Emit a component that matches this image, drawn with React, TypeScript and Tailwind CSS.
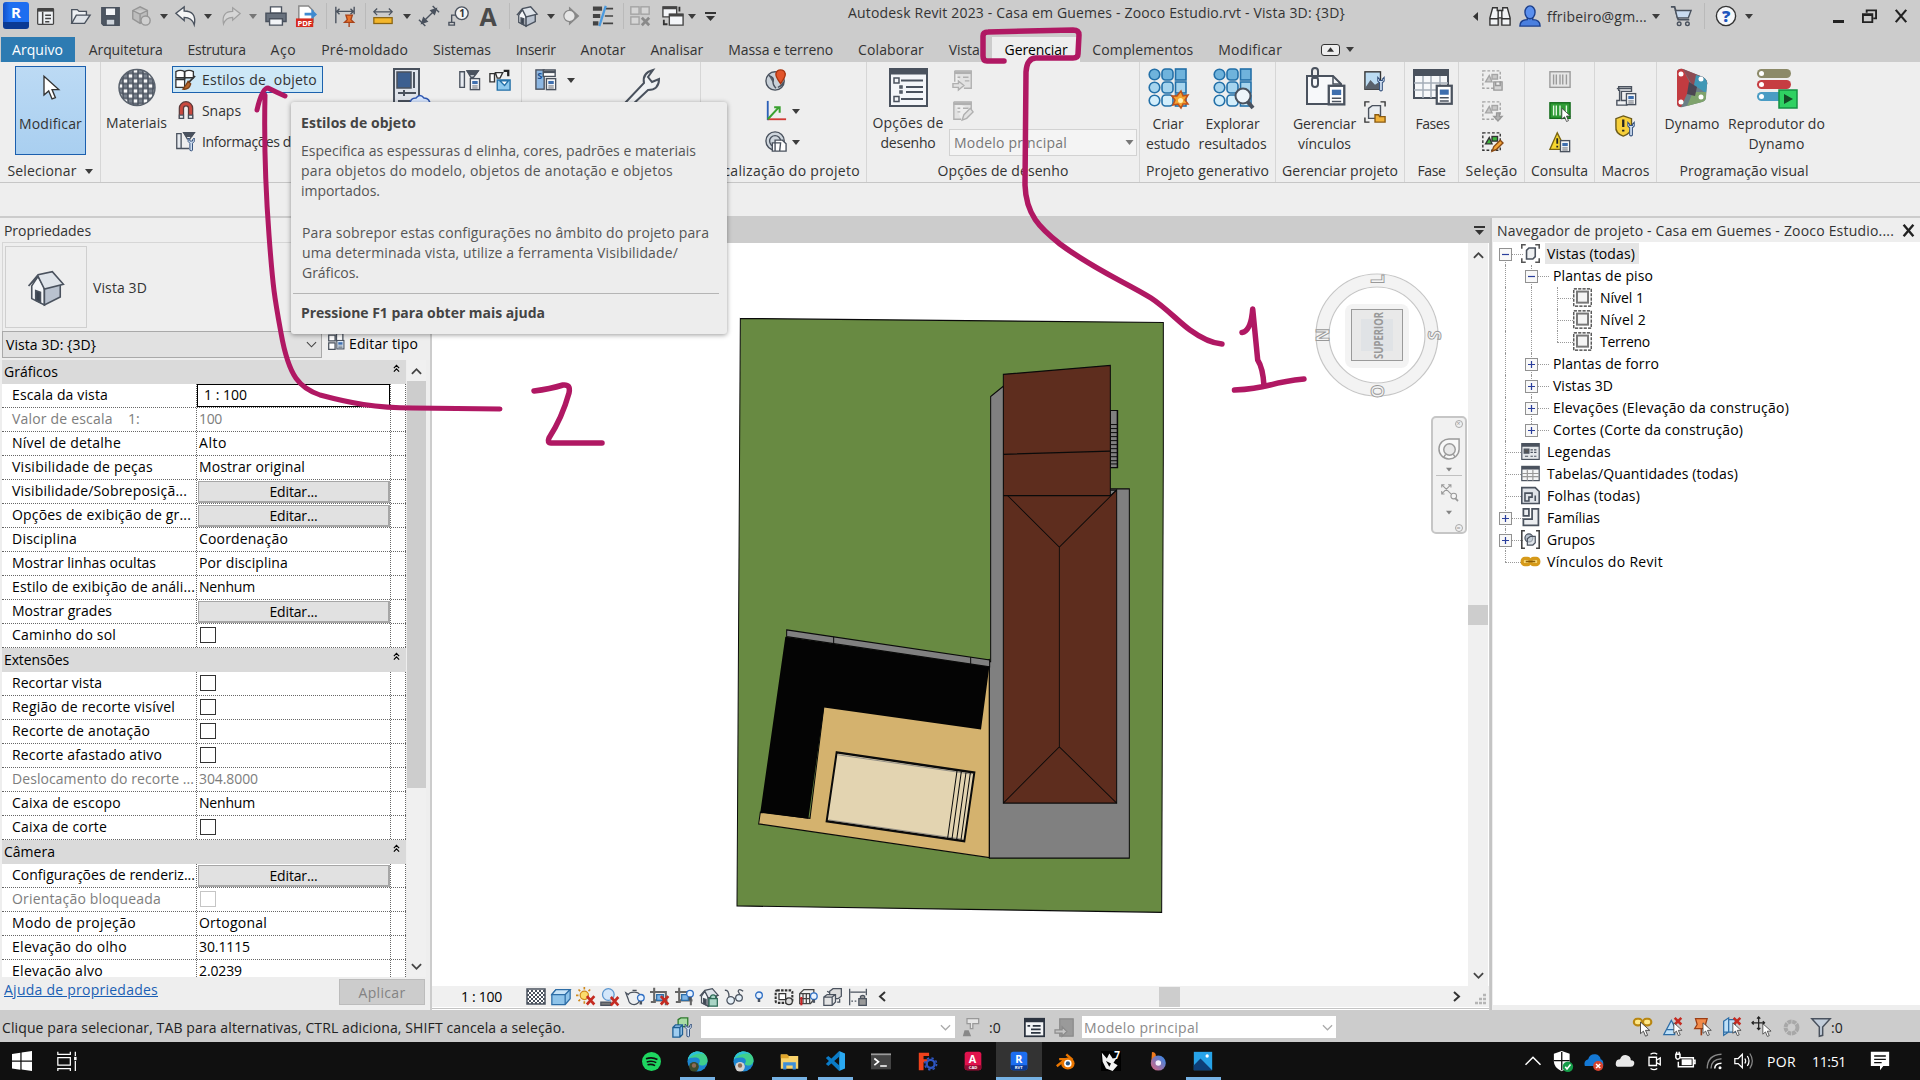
import React, { useLayoutEffect, useRef, useState } from "react";

type Kids = { children?: React.ReactNode };

/* Text tracked so that it fills the given width. */
function T({ w, c = "", children }: { w?: number; c?: string; children: string }) {
  const ref = useRef<HTMLSpanElement>(null);
  const [ls, setLs] = useState(0);
  useLayoutEffect(() => {
    if (!w || !ref.current) return;
    setLs((w - ref.current.getBoundingClientRect().width) / children.length);
  }, []);
  return (
    <span ref={ref} className={"inline-block shrink-0 whitespace-pre " + c} style={{ letterSpacing: ls + "px" }}>
      {children}
    </span>
  );
}

function Ico({ c = "size-[22px]", vb = "0 0 24 24", children }: Kids & { c?: string; vb?: string }) {
  return (
    <svg viewBox={vb} className={"block shrink-0 overflow-visible " + c} fill="none" stroke="#4a525e" strokeWidth="1.5">
      {children}
    </svg>
  );
}

const Caret = ({ c = "" }: { c?: string }) => (
  <Ico c={"h-[5px] w-[8px] " + c} vb="0 0 8 5">
    <path d="M0 0h8L4 5z" fill="#3c3c3c" stroke="none" />
  </Ico>
);
const Sep = ({ c }: { c: string }) => <div className={"h-[26px] w-px shrink-0 bg-[#bababa] " + c} />;

const Sheet = ({ x = 12, y = 11, f = "#fff" }: { x?: number; y?: number; f?: string }) => (
  <g transform={`translate(${x} ${y})`}>
    <rect x=".5" y=".5" width="10" height="12" fill={f} />
    <path d="M2.5 3h6v3.5h-6z" fill="#3f6fae" stroke="none" />
    <path d="M2.5 8.5h6M2.5 10.7h6" strokeWidth="1" />
  </g>
);
const Wrench = ({ x = 0, y = 0 }) => (
  <path
    transform={`translate(${x} ${y})`}
    d="M1 1v4l2 2v8q1.5 1.500 3 0V7l2-2V1L6 3v1.500H3V3z"
    fill="#cfdff2"
    stroke="#33507c"
    strokeWidth="1.100"
  />
);
const Cursor = ({ x = 0, y = 0, s = 1 }) => (
  <path transform={`translate(${x} ${y}) scale(${s})`} d="M0 0v14l3.500-3 2.500 6 2.500-1-2.500-6h5z" fill="#fff" stroke="#333" strokeWidth="1" />
);
const House = () => (
  <>
    <path d="M3 11v8l8 4V12L7 5z" fill="#f4f6f9" />
    <path d="M11 12l10-2v8l-10 5z" fill="#b9c2cf" />
    <path d="M1 11L7 4l9-2 7 8-12 3-4-8z" fill="#dfe4ea" />
    <path d="M5.500 20v-6l3 1v6.500z" fill="#3a4350" />
  </>
);
const RedX = ({ x = 12, y = 12 }) => <path d={`M${x} ${y}l9 10M${x + 9} ${y}l-9 10`} stroke="#c42b22" strokeWidth="3.200" />;
const Bulb = ({ x = 0, y = 0 }) => (
  <g transform={`translate(${x} ${y})`}>
    <circle cx="5" cy="5" r="4" fill="#e9f3ff" stroke="#2f6fc4" strokeWidth="1.600" />
    <path d="M3.500 9h3v4h-3z" fill="#4a525e" stroke="none" />
  </g>
);

function TitleBar() {
  return (
    <header className="flex h-[37px] shrink-0 items-start bg-[#cccccc]">
      <div className="ml-[3px] mt-[2px] flex h-[27px] w-[26px] shrink-0 flex-col rounded-[3px] border-b-[7px] border-[#0a3a94] bg-gradient-to-r from-[#1450c8] to-[#1d6ef0] to-25% text-center text-[15px] font-bold leading-[21px] text-white">
        R
      </div>
      <div className="flex h-[32px] items-center">
        <Ico c="ml-[7px] size-[20px]">
          <rect x="2" y="3" width="19" height="19" rx="1" fill="#eef1f4" stroke="#444" />
          <path d="M2 5h19" strokeWidth="3.500" stroke="#444" />
          <path d="M8 7v15M11 11h7M11 15h7M11 19h5" stroke="#444" strokeWidth="1.800" />
        </Ico>
        <Ico c="ml-[13px] size-[22px]">
          <path d="M3 20V5h6l2 2h8v4" fill="#eef1f4" />
          <path d="M3 20l5-9h15l-6 9z" fill="#dfe3e8" />
        </Ico>
        <Ico c="ml-[9px] size-[21px]">
          <path d="M2 2h20v20H4l-2-2z" fill="#4d5662" />
          <path d="M6 2h12v9H6z" fill="#f2f4f7" />
          <path d="M7 15h10v7H7z" fill="#cfd5dc" />
        </Ico>
        <Ico c="ml-[9px] size-[22px]">
          <g stroke="#959595" fill="#bdbdbd">
            <path d="M3 6l8-4 8 4v9l-8 5-8-5zM3 6l8 4 8-4M11 10v10" />
            <circle cx="17" cy="17" r="5" fill="#d0d0d0" />
          </g>
        </Ico>
        <Caret c="ml-[8px]" />
        <Ico c="ml-[7px] size-[22px]">
          <path d="M1 9l9-7v4.500c9 0 13 5 11 15-2-6-5-8-11-8V17z" fill="#f6f6f6" />
        </Ico>
        <Caret c="ml-[7px]" />
        <Ico c="ml-[9px] size-[20px]">
          <path d="M23 9l-9-7v4.500C5 6.500 1 11.500 3 21.500c2-6 5-8 11-8V17z" fill="#d6d6d6" stroke="#a0a0a0" />
        </Ico>
        <Caret c="ml-[8px] opacity-60" />
        <Ico c="ml-[8px] size-[22px]">
          <path d="M6 2h12v7H6z" fill="#fff" />
          <path d="M1 9h22v9H1z" fill="#68717d" />
          <path d="M5 15h14v7H5z" fill="#f2f4f7" />
        </Ico>
        <Ico c="ml-[8px] size-[23px]">
          <path d="M4 1h10l5 5v12H4z" fill="#fff" stroke="#888" />
          <path d="M10 8h7V4l6 6-6 5v-4h-7z" fill="#3f8ad0" stroke="none" />
          <rect x="1" y="14" width="18" height="9" fill="#d62a1e" stroke="none" />
          <text x="2.500" y="21.500" fontSize="8" fontWeight="700" fill="#fff" stroke="none">PDF</text>
        </Ico>
        <Sep c="ml-[8px]" />
        <Ico c="ml-[7px] size-[22px]">
          <path d="M2 2v18M22 2v8M3 7h18M6 4L3 7l3 3M18 4l3 3-3 3" />
          <path d="M13 11h7l-1.500 5 3 3h-10l3-3zM16.500 19v5" fill="#e8742c" stroke="#a8431a" />
        </Ico>
        <Sep c="ml-[9px]" />
        <Ico c="ml-[7px] size-[20px]">
          <path d="M1 7h22M5 3L1 7l4 4M19 3l4 4-4 4" />
          <rect x="1" y="14" width="22" height="7" fill="#f3b62b" stroke="#8a6412" />
        </Ico>
        <Caret c="ml-[10px]" />
        <Ico c="ml-[7px] size-[22px]">
          <path d="M4 20L20 4M1 16l7 7M16 1l7 7" />
          <path d="M20 4l-6 2 4 4zM4 20l6-2-4-4z" fill="#4a525e" />
        </Ico>
        <Ico c="ml-[8px] size-[22px]">
          <circle cx="15" cy="9" r="7" fill="#f4f4f4" />
          <path d="M8 11H4v8M1 19h6v3H1z" />
          <text x="12.300" y="13" fontSize="11" fontWeight="700" fill="#333" stroke="none">1</text>
        </Ico>
        <span className="ml-[8px] w-[20px] text-center text-[25px] font-bold leading-[28px] text-[#4a4a4a]">A</span>
        <Sep c="ml-[11px]" />
        <Ico c="ml-[6px] size-[22px]"><House /></Ico>
        <Caret c="ml-[9px]" />
        <Ico c="ml-[7px] size-[18px]">
          <path d="M10 1l12 11-12 11z" fill="#888" stroke="#888" />
          <circle cx="10" cy="12" r="7.500" fill="#e6e6e6" stroke="#888" />
        </Ico>
        <Ico c="ml-[12px] size-[22px]">
          <path d="M1 4h10M1 12h8M1 20h6" stroke="#444" strokeWidth="4.500" />
          <path d="M15 4h8M14 12h9M12 20h11" stroke="#444" strokeWidth="1.800" />
          <path d="M15 1L8 23" stroke="#4b9be0" strokeWidth="2.500" />
        </Ico>
        <Sep c="ml-[9px]" />
        <Ico c="ml-[5px] size-[22px]">
          <g stroke="#a3a3a3" fill="#d6d6d6">
            <rect x="2" y="2" width="9" height="8" />
            <rect x="13" y="2" width="9" height="8" />
            <rect x="2" y="13" width="9" height="8" />
            <path d="M14 14l8 8M22 14l-8 8" stroke="#8a8a8a" strokeWidth="3" />
          </g>
        </Ico>
        <Ico c="ml-[11px] size-[22px]">
          <path d="M1 2h15v11H1z" fill="#f4f6f9" stroke="#444" />
          <path d="M8 10h15v12H8z" fill="#f4f6f9" stroke="#444" />
          <path d="M1 3h15M8 11h15" stroke="#444" strokeWidth="3" />
          <path d="M19 2v5M2 16v5h4" stroke="#333" strokeWidth="2" />
        </Ico>
        <Caret c="ml-[4px]" />
        <Ico c="ml-[9px] h-[9px] w-[11px]" vb="0 0 11 9">
          <path d="M0 1h11" stroke="#333" strokeWidth="2" />
          <path d="M1 4h9L5.500 9z" fill="#333" stroke="none" />
        </Ico>
      </div>
      <T w={497} c="ml-[132px] mt-[2px] text-[14px] leading-[22px] text-[#333]">
        {"Autodesk Revit 2023 - Casa em Guemes - Zooco Estudio.rvt - Vista 3D: {3D}"}
      </T>
      <div className="ml-[128px] flex h-[32px] items-center">
        <Ico c="h-[9px] w-[5px]" vb="0 0 5 9"><path d="M5 0v9L0 4.500z" fill="#333" stroke="none" /></Ico>
        <Ico c="ml-[11px] size-[22px]">
          <path d="M4 3h5v3h6V3h5l3 11v8h-9v-8h-4v8H1v-8z" fill="#f1f3f5" stroke="#333" />
          <path d="M1 15h9M14 15h9M10 6v8M14 6v8" stroke="#333" />
        </Ico>
        <Ico c="ml-[8px] size-[22px]">
          <path d="M1 23c0-6 4-7 8-7v-3h6v3c4 0 8 1 8 7z" fill="#4a7fdf" stroke="#1b3f8c" />
          <ellipse cx="12" cy="8" rx="5.500" ry="7" fill="#5a8fee" stroke="#1b3f8c" />
        </Ico>
        <T w={100} c="ml-[6px] text-[14px] text-[#333]">ffribeiro@gm...</T>
        <Caret c="ml-[5px]" />
        <Ico c="ml-[10px] size-[22px]">
          <path d="M1 2h4l4 14h12" strokeWidth="2" />
          <path d="M6 6h17l-3 8H8z" fill="#c9dbf0" />
          <circle cx="10" cy="20.500" r="2" />
          <circle cx="19" cy="20.500" r="2" />
        </Ico>
        <Sep c="ml-[12px]" />
        <Ico c="ml-[10px] size-[22px]">
          <circle cx="12" cy="12" r="10.500" fill="#f5f7fa" stroke="#333" />
          <text x="7.500" y="18.500" fontSize="18" fontWeight="800" fill="#1d55bd" stroke="none">?</text>
        </Ico>
        <Caret c="ml-[8px]" />
        <div className="ml-[80px] mt-[11px] h-[3px] w-[11px] bg-[#222]" />
        <Ico c="ml-[18px] size-[15px]" vb="0 0 16 16">
          <path d="M5 4V1.500h10V10h-3" stroke="#222" strokeWidth="2" />
          <path d="M1 5.500h10V14H1zM1 6.500h10" stroke="#222" strokeWidth="2" />
        </Ico>
        <Ico c="ml-[17px] size-[14px]" vb="0 0 16 16">
          <path d="M2 1l12 14M14 1L2 15" stroke="#222" strokeWidth="2.500" />
        </Ico>
      </div>
    </header>
  );
}

const TABS: [string, number][] = [
  ["Arquitetura", 74], ["Estrutura", 58], ["Aço", 26], ["Pré-moldado", 87], ["Sistemas", 58], ["Inserir", 40],
  ["Anotar", 45], ["Analisar", 53], ["Massa e terreno", 105], ["Colaborar", 66], ["Vista", 31], ["Gerenciar", 63],
  ["Complementos", 101], ["Modificar", 64],
];

function Tabs() {
  return (
    <nav className="flex h-[25px] shrink-0 items-stretch bg-[#cccccc] pl-px text-[14px] leading-[25px] text-[#333]">
      <div className="mr-[1px] w-[74px] bg-[#2d7bb2] pl-[11px] text-white"><T w={51}>Arquivo</T></div>
      {TABS.map(([n, w]) => (
        <div key={n} className={"pl-[12.8px] pr-[12px] " + (n === "Gerenciar" ? "bg-[#eeeeee] text-black" : "")}>
          <T w={w}>{n}</T>
        </div>
      ))}
      <div className="ml-[27px] flex items-center">
        <div className="flex h-[12px] w-[19px] items-center justify-center rounded-[3px] border border-[#333] bg-[#eee]">
          <Ico c="h-[5px] w-[7px]" vb="0 0 8 5"><path d="M0 5h8L4 0z" fill="#333" stroke="none" /></Ico>
        </div>
        <Caret c="ml-[6px]" />
      </div>
    </nav>
  );
}

function Panel({ c, label, lw = 0, children }: Kids & { c: string; label?: string; lw?: number }) {
  return (
    <section className={"flex h-[120px] shrink-0 flex-col border-r border-[#d6d6d6] " + c}>
      <div className="flex h-[98px] items-start">{children}</div>
      <div className="flex h-[22px] items-center justify-center leading-[22px]">
        {label && <T w={lw}>{label}</T>}
        {label === "Selecionar" && <Caret c="ml-[8px]" />}
      </div>
    </section>
  );
}

function Big({ c, lines, children }: Kids & { c: string; lines: [string, number][] }) {
  return (
    <div className={"flex shrink-0 flex-col items-center pt-[6px] " + c}>
      {children}
      <div className="mt-[6px] flex flex-col items-center leading-[20px]">
        {lines.map(([t, w]) => <T key={t} w={w}>{t}</T>)}
      </div>
    </div>
  );
}

const Dots = () => (
  <g stroke="#2370a8" strokeWidth="1.600">
    {[0, 1, 2].map((r) => {
      const f = ["#6fb3dc", "#a6d4ee", "#d3eefb"][r];
      const y = r * 13 + 1;
      return (
        <g key={r} fill={f}>
          <circle cx="6.500" cy={y + 5.500} r="5.300" />
          <rect x="14" y={y} width="11" height="11" rx="3.500" />
          <rect x="27.500" y={y} width="10.500" height="11" />
        </g>
      );
    })}
  </g>
);

const SelBox = ({ g = "#a5a5a5", f = "#c8c8c8" }) => (
  <>
    <rect x="2" y="2" width="19" height="19" stroke={g} strokeDasharray="3 2" />
    <path d="M5 14l4-7 3 7z" fill={f} stroke={g} />
    <rect x="12" y="6" width="6" height="5" fill={f} stroke={g} />
  </>
);

function Ribbon() {
  return (
    <div className="flex h-[121px] shrink-0 border-b border-[#c6c6c6] bg-[#eeeeee] text-[14px] text-[#333]">
      <Panel c="w-[101px]" label="Selecionar" lw={69}>
        <div className="ml-[15px] mt-[4px] flex h-[89px] w-[71px] flex-col items-center border border-[#1b5fae] bg-gradient-to-b from-[#bcdaf4] to-[#a9cff0]">
          <Ico c="mt-[8px] size-[28px]"><Cursor x={6} y={1} s={1.15} /></Ico>
          <T w={63} c="mt-[11px] leading-[20px]">Modificar</T>
        </div>
      </Panel>
      <Panel c="w-[421px]">
        <Big c="w-[71px]" lines={[["Materiais", 61]]}>
          <Ico c="h-[39px] w-[38px]" vb="0 0 38 38">
            <defs>
              <pattern id="chk" width="10" height="10" patternUnits="userSpaceOnUse">
                <rect width="10" height="10" fill="#fafafa" />
                <path d="M0 0h5v5H0zM5 5h5v5H5z" fill="#7b838e" />
              </pattern>
            </defs>
            <circle cx="19" cy="19" r="18" fill="url(#chk)" stroke="#59616c" />
          </Ico>
        </Big>
        <div className="flex w-[152px] flex-col pt-[4px]">
          <div className="flex h-[27px] w-[151px] items-center border border-[#1b62ae] bg-[#cde8f7] pl-[2px]">
            <Ico c="size-[21px]">
              <path d="M1 3q5-3 10 0 5-3 10 0v7H1zM1 12h10v9H1z" fill="#fff" stroke="#333" />
              <path d="M11 3v9M23 8l-9 9" stroke="#333" strokeWidth="2" />
              <path d="M15 14l3 3q-2 7-9 6 4-5 6-9z" fill="#b5652b" stroke="#7a3f16" />
            </Ico>
            <T w={115} c="ml-[6px]">Estilos de  objeto</T>
          </div>
          <div className="mt-px flex h-[32px] items-center pl-[4px]">
            <Ico c="size-[20px]">
              <path d="M4 22V10a8 8 0 0116 0v12h-5V10a3 3 0 00-6 0v12z" fill="#c9493f" stroke="#5c3a3a" />
              <path d="M4 18h5v4H4zM15 18h5v4h-5z" fill="#eee" />
            </Ico>
            <T w={39} c="ml-[6px]">Snaps</T>
          </div>
          <div className="flex h-[30px] items-center pl-[3px]">
            <Ico c="size-[21px]">
              <path d="M2 3h5v17H2zM10 2h12l-5 7h-3zM7 20h9" fill="#e7ebf0" />
              <path d="M10 2h12l-3 4h-6z" fill="#4a525e" />
              <Wrench x={14} y={7} />
            </Ico>
            <T w={89} c="ml-[6px]">Informações d</T>
          </div>
        </div>
        <Ico c="ml-[69px] mt-[6px] h-[42px] w-[38px]" vb="0 0 38 42">
          <rect x="1" y="1" width="25" height="38" fill="#dfe3ea" strokeWidth="2" />
          <rect x="4" y="4" width="14" height="16" fill="#3c5f90" />
          <path d="M21 4v16M5 25h18M5 33h12M11 22v6" strokeWidth="2" />
          <path d="M17 36q0-6 6-6 4-5 8 0 6 0 6 7z" fill="#d7e6ff" stroke="#2c55b0" />
        </Ico>
        <Ico c="ml-[27px] mt-[7px] size-[22px]">
          <path d="M2 3h5v17H2zM10 2h12l-5 7h-3z" fill="#e7ebf0" />
          <path d="M10 2h12l-3 4h-6z" fill="#4a525e" />
          <Sheet x={13} y={10} />
        </Ico>
        <Ico c="ml-[9px] mt-[7px] size-[22px]">
          <path d="M1 5h5v9H1zM7 4h8l-3 6H9z" fill="#fff" stroke="#333" />
          <path d="M16 2h5v6" stroke="#222" strokeWidth="2.500" />
          <path d="M9 12h14v11H9z" fill="#8ec9ee" stroke="#2370a8" />
          <path d="M12 13h9l-4 5z" fill="#fff" stroke="#2370a8" />
        </Ico>
      </Panel>
      <Panel c="w-[179px]">
        <Ico c="ml-[13px] mt-[7px] size-[22px]">
          <rect x="1" y="1" width="9" height="21" fill="#8db7e2" />
          <path d="M9 1h13v7H9z" fill="#fff" />
          <path d="M9 3h13" strokeWidth="3" />
          <Sheet x={12} y={10} />
          <text x="2.500" y="11" fontSize="10" fontWeight="700" fill="#1b4f90" stroke="none">S</text>
        </Ico>
        <Caret c="ml-[10px] mt-[16px]" />
        <Ico c="ml-[47px] mt-[6px] size-[40px]" vb="0 0 40 40">
          <path d="M3 35L22 15q-2-10 9-13l-5 7 4 5 7-3q0 11-11 11L8 39q-7 1-5-4z" fill="#f0f2f4" strokeWidth="2" />
        </Ico>
      </Panel>
      <Panel c="w-[166px]" label="Localização do projeto" lw={153}>
        <div className="ml-[64px] flex flex-col pt-[7px]">
          <Ico c="size-[22px]">
            <circle cx="11" cy="13" r="10" fill="#c8d0d8" />
            <path d="M4 7q6 2 5 6t3 8M14 20q6-2 6-6" fill="#59616c" />
            <path d="M17 16q-6-8-5-11 1-4 5-4t5 4q1 3-5 11z" fill="#e2542a" stroke="#a9340f" />
          </Ico>
          <div className="mt-[9px] flex items-center">
            <Ico c="size-[22px]">
              <path d="M3 1v21" stroke="#2a5fb8" strokeWidth="2" />
              <path d="M3 21h20" stroke="#d23b35" strokeWidth="2" />
              <path d="M3 21L15 8M10 8h6v6" stroke="#3aa12f" strokeWidth="2.200" />
            </Ico>
            <Caret c="ml-[5px]" />
          </div>
          <div className="mt-[9px] flex items-center">
            <Ico c="size-[22px]">
              <circle cx="11" cy="11" r="10" fill="#cfd6dd" />
              <circle cx="11" cy="11" r="6" />
              <path d="M8 13h9l-1 9H8zM11 10h8l4 4v8H11z" fill="#fff" />
            </Ico>
            <Caret c="ml-[5px]" />
          </div>
        </div>
      </Panel>
      <Panel c="w-[273px]" label="Opções de desenho" lw={131}>
        <Big c="w-[82px]" lines={[["Opções de", 71], ["desenho", 55]]}>
          <Ico c="h-[39px] w-[39px]" vb="0 0 39 39">
            <rect x="1" y="1" width="37" height="37" fill="#f4f6f9" strokeWidth="2" />
            <path d="M1 4h37" strokeWidth="5" />
            <path d="M12 12.500h22M17 19h17M17 24h17M12 31h22" strokeWidth="2" />
            <path d="M5 10h5v5H5zM5 28.500h5v5H5zM11 18h2v2h-2zM11 23h2v2h-2z" />
          </Ico>
        </Big>
        <div className="flex flex-col pt-[7px]">
          <Ico c="ml-[3px] size-[22px]">
            <g stroke="#b0b0b0" fill="#e2e2e2">
              <path d="M3 2h18v19h-8M3 2v12" /><path d="M3 4h18" strokeWidth="3" />
              <path d="M6 9h3M12 9h6M14 13h5" /><path d="M1 16h6v-3l6 5-6 5v-3H1z" />
            </g>
          </Ico>
          <Ico c="ml-[3px] mt-[9px] size-[22px]">
            <g stroke="#b0b0b0" fill="#e2e2e2">
              <path d="M2 2h19v8M2 2v19h8" /><path d="M2 4h19" strokeWidth="3" />
              <path d="M6 9h3M12 9h6M6 13h3" /><path d="M11 22l2-6 7-7 3 4-7 7z" />
            </g>
          </Ico>
          <div className="mt-[7px] flex h-[27px] w-[188px] items-center justify-between border border-[#d2d2d2] bg-[#f4f4f4] pl-[4px] pr-[2px] text-[#777]">
            <T w={113}>Modelo principal</T>
            <Ico c="h-[5px] w-[9px]" vb="0 0 8 5"><path d="M0 0h8L4 5z" fill="#777" stroke="none" /></Ico>
          </div>
        </div>
      </Panel>
      <Panel c="w-[136px]" label="Projeto generativo" lw={123}>
        <Big c="w-[56px]" lines={[["Criar", 31], ["estudo", 44]]}>
          <Ico c="size-[40px]" vb="0 0 40 40">
            <Dots />
            <path d="M33 23l2 5 5-1-3 5 3 4-5 0-2 4-3-4-5 1 2-5-3-4 5 0z" fill="#f5a431" stroke="#c0511a" strokeWidth="1.500" />
            <circle cx="32.500" cy="32.500" r="2.500" fill="#fff2b8" stroke="none" />
          </Ico>
        </Big>
        <Big c="w-[73px]" lines={[["Explorar", 54], ["resultados", 68]]}>
          <Ico c="size-[40px]" vb="0 0 40 40">
            <Dots />
            <path d="M34 33l6 7" strokeWidth="4" />
            <circle cx="30" cy="28" r="7.500" fill="#eef5fa" strokeWidth="2" />
          </Ico>
        </Big>
      </Panel>
      <Panel c="w-[129px]" label="Gerenciar projeto" lw={116}>
        <Big c="ml-[11px] w-[75px]" lines={[["Gerenciar", 63], ["vínculos", 53]]}>
          <Ico c="size-[40px]" vb="0 0 40 40">
            <path d="M2 8h26l8 8v20H2z" fill="#f7f8fa" strokeWidth="2" />
            <path d="M28 8v8h8" />
            <rect x="7" y="0" width="6" height="10" rx="3" strokeWidth="2" />
            <rect x="7" y="9" width="6" height="10" rx="3" strokeWidth="2" />
            <g transform="translate(23 17) scale(1.550)"><Sheet x={0} y={0} /></g>
          </Ico>
        </Big>
        <div className="ml-[2px] flex flex-col pt-[8px]">
          <Ico c="size-[22px]">
            <rect x="1" y="2" width="17" height="19" fill="#bcdcf3" stroke="#333" />
            <path d="M1 20l6-9 5 5 6-4v9H1z" fill="#59616c" stroke="none" />
            <Wrench x={14} y={7} />
          </Ico>
          <Ico c="mt-[9px] size-[22px]">
            <path d="M1 6V1h5M18 1h5v5M1 18v5h5" stroke="#333" />
            <path d="M5 8l4-3h9v11l-3 3H5z" fill="#e9edf1" />
            <path d="M12 15h4l1 2h6v6H12z" fill="#f0b23a" stroke="#8a5a10" />
          </Ico>
        </div>
      </Panel>
      <Panel c="w-[54px]" label="Fase" lw={28}>
        <Big c="w-[55px]" lines={[["Fases", 34]]}>
          <Ico c="size-[40px]" vb="0 0 40 40">
            <rect x="1" y="2" width="34" height="28" fill="#f7f8fa" strokeWidth="2" />
            <path d="M1 5h34" strokeWidth="6" />
            <path d="M1 15h34M1 22h34M10 8v22M18 8v22M27 8v22" stroke="#a5adb8" />
            <g transform="translate(23 17) scale(1.500)"><Sheet x={0} y={0} /></g>
          </Ico>
        </Big>
      </Panel>
      <Panel c="w-[66px]" label="Seleção" lw={52}>
        <div className="flex w-full flex-col items-center gap-[9px] pt-[7px]">
          <Ico><SelBox /><path d="M14 14h9v9h-9zM16 14v4h5v-4" fill="#d5d5d5" stroke="#999" /></Ico>
          <Ico><SelBox /><path d="M17 14h3v4h3l-4.500 5-4.500-5h3z" fill="#b5b5b5" stroke="#999" /></Ico>
          <Ico><SelBox g="#333" f="#3db53d" /><path d="M12 22l2-5 7-7 3 3-7 7z" fill="#f2a33a" stroke="#8a4a12" /></Ico>
        </div>
      </Panel>
      <Panel c="w-[70px]" label="Consulta" lw={57}>
        <div className="flex w-full flex-col items-center gap-[9px] pt-[7px]">
          <Ico><rect x="1" y="3" width="22" height="17" fill="#e6e6e6" stroke="#9a9a9a" /><path d="M5 6v11M8 6v11M12 6v11M15 6v11M19 6v11" stroke="#9a9a9a" /></Ico>
          <Ico><rect x="1" y="3" width="22" height="17" fill="#2f9b35" stroke="#146b1c" /><path d="M5 6v11M8 6v11M12 6v11M19 6v11" stroke="#e4f7e4" /><Cursor x={14} y={9} s={0.85} /></Ico>
          <Ico><path d="M9 2l9 18H1z" fill="#f6d62e" stroke="#7a6510" /><path d="M9 8v6M9 16v2" stroke="#222" strokeWidth="2" /><Sheet x={12} y={10} /></Ico>
        </div>
      </Panel>
      <Panel c="w-[62px]" label="Macros" lw={48}>
        <div className="flex w-full flex-col items-center gap-[9px] pt-[22px]">
          <Ico><path d="M4 3h14v5H7v10h6v5H2v-5h3V7H4z" fill="#f0f2f4" /><path d="M2 5h16" /><Sheet x={12} y={10} /></Ico>
          <Ico><path d="M9 1l9 3v8q0 8-9 11Q0 20 1 12V4z" fill="#f6cf3a" stroke="#6b5a18" /><path d="M9 5v8M9 16v2" stroke="#222" strokeWidth="2.500" /><Wrench x={13} y={7} /></Ico>
        </div>
      </Panel>
      <Panel c="w-[174px] border-r-0" label="Programação visual" lw={129}>
        <Big c="w-[70px]" lines={[["Dynamo", 55]]}>
          <Ico c="size-[40px]" vb="0 0 40 40">
            <g stroke="none">
              <path d="M5 3q2-3 6-2l20 8q5 3 4 8l-1 12q0 4-4 5L11 39q-6 1-6-4z" fill="#6b7f86" />
              <path d="M5 3q2-3 6-2l8 16L9 39q-4 0-4-4z" fill="#c23b40" />
              <path d="M11 1l20 8q5 3 4 8l-15 0z" fill="#8f4c53" />
              <path d="M24 7l7 2q5 3 4 8l-1 8-12-8z" fill="#3f97b5" />
              <path d="M34 24l0 5q0 4-4 5L15 38l6-14z" fill="#7fa36c" />
              <path d="M17 14l8 5-2 9-8-2z" fill="#4c4552" />
              <circle cx="9" cy="6" r="2.500" fill="#fff" /><circle cx="29" cy="11" r="2.500" fill="#fff" />
              <circle cx="9" cy="34" r="2.500" fill="#fff" /><circle cx="29" cy="29" r="2.500" fill="#fff" />
            </g>
          </Ico>
        </Big>
        <Big c="w-[99px]" lines={[["Reprodutor do", 97], ["Dynamo", 56]]}>
          <Ico c="size-[40px]" vb="0 0 40 40">
            <g stroke="none">
              <rect x="0" y="1" width="34" height="9" rx="4.500" fill="#8c8a68" />
              <rect x="0" y="12" width="34" height="9" rx="4.500" fill="#c63d42" />
              <rect x="0" y="24" width="34" height="9" rx="4.500" fill="#4a9cc4" />
              <circle cx="4.500" cy="5.500" r="2.500" fill="#fff" /><circle cx="4.500" cy="16.500" r="2.500" fill="#fff" /><circle cx="4.500" cy="28.500" r="2.500" fill="#fff" />
              <rect x="22" y="22" width="18" height="18" fill="#2fd162" stroke="#159043" />
              <path d="M27 26v10l9-5z" fill="#134a25" />
            </g>
          </Ico>
        </Big>
      </Panel>
    </div>
  );
}

function Tooltip() {
  return (
    <aside className="absolute left-[291px] top-[102px] h-[232px] w-[436px] rounded-[3px] bg-[#ededed] text-[14px] leading-[20px] text-[#555] shadow-[0_1px_5px_rgba(0,0,0,0.4)]">
      <div className="flex flex-col items-start pl-[10px] pt-[11px]">
        <T w={115} c="font-bold text-[#444]">Estilos de objeto</T>
        <T w={395} c="mt-[8px]">Especifica as espessuras d elinha, cores, padrões e materiais</T>
        <T w={372}>para objetos do modelo, objetos de anotação e objetos</T>
        <T w={79}>importados.</T>
        <T w={407} c="ml-px mt-[22px]">Para sobrepor estas configurações no âmbito do projeto para</T>
        <T w={376} c="ml-px">uma determinada vista, utilize a ferramenta Visibilidade/</T>
        <T w={57} c="ml-px">Gráficos.</T>
      </div>
      <div className="ml-[2px] mt-[10px] h-px w-[426px] bg-[#b5b5b5]" />
      <T w={244} c="ml-[10px] mt-[9px] font-bold text-[#444]">Pressione F1 para obter mais ajuda</T>
    </aside>
  );
}

type Row = { n: string; w: number; v?: string; vw?: number; k?: "e" | "c" | "i"; off?: boolean };
const GROUPS: { t: string; w: number; rows: Row[] }[] = [
  { t: "Gráficos", w: 54, rows: [
    { n: "Escala da vista", w: 96, v: "1 : 100", vw: 43, k: "i" },
    { n: "Valor de escala    1:", w: 128, v: "100", vw: 23, off: true },
    { n: "Nível de detalhe", w: 109, v: "Alto", vw: 28 },
    { n: "Visibilidade de peças", w: 141, v: "Mostrar original", vw: 106 },
    { n: "Visibilidade/Sobreposiçã...", w: 175, k: "e" },
    { n: "Opções de exibição de gr...", w: 179, k: "e" },
    { n: "Disciplina", w: 65, v: "Coordenação", vw: 89 },
    { n: "Mostrar linhas ocultas", w: 144, v: "Por disciplina", vw: 89 },
    { n: "Estilo de exibição de análi...", w: 183, v: "Nenhum", vw: 56 },
    { n: "Mostrar grades", w: 100, k: "e" },
    { n: "Caminho do sol", w: 104, k: "c" },
  ] },
  { t: "Extensões", w: 65, rows: [
    { n: "Recortar vista", w: 90, k: "c" },
    { n: "Região de recorte visível", w: 163, k: "c" },
    { n: "Recorte de anotação", w: 138, k: "c" },
    { n: "Recorte afastado ativo", w: 150, k: "c" },
    { n: "Deslocamento do recorte ...", w: 182, v: "304.8000", vw: 59, off: true },
    { n: "Caixa de escopo", w: 109, v: "Nenhum", vw: 56 },
    { n: "Caixa de corte", w: 95, k: "c" },
  ] },
  { t: "Câmera", w: 51, rows: [
    { n: "Configurações de renderiz...", w: 183, k: "e" },
    { n: "Orientação bloqueada", w: 149, k: "c", off: true },
    { n: "Modo de projeção", w: 124, v: "Ortogonal", vw: 68 },
    { n: "Elevação do olho", w: 115, v: "30.1115", vw: 51 },
    { n: "Elevação alvo", w: 91, v: "2.0239", vw: 43 },
  ] },
];

const Chev = ({ c = "", d = "M1 6l5-5 5 5", k = "#444", sw = 2 }: { c?: string; d?: string; k?: string; sw?: number }) => (
  <Ico c={"h-[7px] w-[11px] " + c} vb="0 0 12 7"><path d={d} stroke={k} strokeWidth={sw} /></Ico>
);

function Properties() {
  return (
    <div className="flex w-[430px] shrink-0 flex-col bg-[#eeeeee] text-[14px] text-black">
      <div className="h-[24px] pl-[4px] leading-[25px] text-[#333]"><T w={87}>Propriedades</T></div>
      <div className="ml-[2px] flex h-[89px] border-l border-t border-[#d6d6d6] pl-[2px] pt-[3px]">
        <div className="flex h-[82px] w-[82px] items-center justify-center border border-[#cfcfcf]">
          <Ico c="h-[39px] w-[38px]"><g strokeWidth="1"><House /></g></Ico>
        </div>
        <T w={54} c="ml-[6px] mt-[32px] leading-[20px] text-[#333]">Vista 3D</T>
      </div>
      <div className="flex h-[29px]">
        <div className="ml-[2px] flex h-[27px] w-[320px] items-center justify-between border border-[#a9a9a9] bg-[#e1e1e1] pl-[3px] pr-[4px]">
          <T w={90}>{"Vista 3D: {3D}"}</T>
          <Chev d="M1 1l5 5 5-5" sw={1.2} />
        </div>
        <Ico c="ml-[6px] mt-[2px] size-[17px]">
          <path d="M1 3h9v8H1zM12 1h9v10h-9zM1 14h9v9H1z" fill="#fff" strokeWidth="1.800" />
          <Sheet x={12} y={10} f="#dbe8f7" />
        </Ico>
        <T w={69} c="ml-[4px] leading-[25px]">Editar tipo</T>
      </div>
      <div className="ml-[2px] flex h-[617px] overflow-hidden">
        <div className="w-[404px] bg-white">
          {GROUPS.map((g) => (
            <div key={g.t}>
              <div className="flex h-[24px] justify-between bg-[#dadada] pl-[2px] pr-[6px] leading-[24px]">
                <T w={g.w}>{g.t}</T>
                <Ico c="mt-[4px] h-[9px] w-[7px]" vb="0 0 8 9"><path d="M1 4l3-3 3 3M1 8l3-3 3 3" stroke="#000" strokeWidth="1.400" /></Ico>
              </div>
              {g.rows.map((r) => (
                <div key={r.n} className={"flex h-[24px] border-b border-dotted border-[#666] leading-[22px] " + (r.off ? "text-[#7d7d7d]" : "")}>
                  <div className="w-[195px] overflow-hidden border-r border-dotted border-[#666] pl-[10px]"><T w={r.w}>{r.n}</T></div>
                  <div className="flex w-[194px] items-start border-r border-dotted border-[#666]">
                    {r.k === "i" && <div className="h-[23px] w-[193px] border border-black pl-[6px] leading-[20px]"><T w={r.vw}>{r.v!}</T></div>}
                    {r.k === "e" && <div className="ml-px mt-px flex h-[22px] w-[192px] justify-center border-b-2 border-l border-r-2 border-t border-[#a6a6a6] bg-[#e1e1e1] leading-[19px]"><T w={48}>Editar...</T></div>}
                    {r.k === "c" && <div className={"ml-[3px] mt-[3px] size-[16px] border " + (r.off ? "border-[#c5c5c5]" : "border-[#333]")} />}
                    {!r.k && <T w={r.vw} c="ml-[2px]">{r.v!}</T>}
                  </div>
                  <div className="w-[15px] border-r border-dotted border-[#666]" />
                </div>
              ))}
            </div>
          ))}
        </div>
        <div className="ml-px flex w-[19px] flex-col items-center bg-[#f0f0f0]">
          <Chev c="mt-[8px]" />
          <div className="mt-[6px] h-[407px] w-full bg-[#cdcdcd]" />
          <Chev c="mt-[175px]" d="M1 1l5 5 5-5" />
        </div>
      </div>
      <div className="flex h-[33px] justify-between pl-[4px] pr-[5px]">
        <T w={154} c="h-[20px] leading-[26px] text-[#1a5fb4] underline">Ajuda de propriedades</T>
        <div className="mt-[2px] flex h-[26px] w-[86px] justify-center border border-[#bcbcbc] bg-[#cccccc] leading-[25px] text-[#838383]"><T w={47}>Aplicar</T></div>
      </div>
    </div>
  );
}

function Model() {
  return (
    <svg viewBox="0 0 1440 1568" preserveAspectRatio="none" className="absolute left-[288px] top-[57px] h-[630px] w-[480px]" stroke="#0a0a0a" strokeWidth="3" strokeLinejoin="miter">
      <path d="M61 46L1330 56V380L1325 1524L51 1508z" fill="#688a42" />
      <path d="M812 240L851 214V470H1228V1389H808V900H812z" fill="#808080" />
      <path d="M1171 275h22v142h-22z" fill="#808080" />
      <path d="M1192 275v142" strokeWidth="4" />
      {[310, 320, 330, 340, 350, 360, 370, 380, 390, 400, 408].map((y) => <path key={y} d={`M1171 ${y}h22`} strokeWidth="2.500" />)}
      <path d="M850 185L1171 163V487L1190 473V1252H850z" fill="#5e2d1e" />
      <path d="M850 384L1171 376M850 487H1171M1171 473h19" fill="none" />
      <path d="M863 487L1018 615L1190 473M1018 615V1112M850 1252L1018 1112L1190 1252" fill="none" strokeWidth="2.500" />
      <path d="M808 895L808 1388L116 1304L121 1275L270 1290L312 1010z" fill="#d4b26e" />
      <path d="M196 838L808 912L783 1069L312 1014L265 1291L121 1275z" fill="#040404" stroke="none" />
      <path d="M200 821L809 896V913L200 838z" fill="#808080" />
      <path d="M341 838v17M752 889v17" />
      <path d="M808 912V1388" />
      <path d="M350 1126L763 1176L733 1347L320 1297z" fill="#e3d4b1" strokeWidth="6" />
      <path d="M354 1132L755 1180M326 1294L728 1342" stroke="#777" strokeWidth="2" />
      <path d="M711 1172l-28 167M724 1174l-28 167M738 1176l-28 167M751 1177l-28 167" fill="none" />
    </svg>
  );
}

function ViewCube() {
  return (
    <svg viewBox="0 0 130 130" className="absolute left-[880px] top-[27px] size-[130px]" fontWeight="700">
      <circle cx="65" cy="65" r="54.500" fill="none" stroke="#f3f3f3" strokeWidth="12" />
      <circle cx="65" cy="65" r="61" fill="none" stroke="#c6c6c6" strokeWidth="1.200" />
      <circle cx="65" cy="65" r="48" fill="none" stroke="#c6c6c6" strokeWidth="1.200" />
      <rect x="33" y="34" width="64" height="64" rx="8" fill="#f3f3f3" />
      <rect x="39.500" y="39.500" width="51" height="51" fill="#e9e9e9" stroke="#9a9a9a" />
      <rect x="49" y="49" width="32" height="32" fill="#e0e3e6" />
      <text transform="translate(71 89) rotate(-90)" fontSize="13" fill="#999" textLength="47" lengthAdjust="spacingAndGlyphs">SUPERIOR</text>
      <g fontSize="17" fill="#f5f5f5" stroke="#999" strokeWidth=".9">
        <text transform="translate(17 72) rotate(-90)">N</text>
        <text transform="translate(72 14) rotate(-90)">L</text>
        <text transform="translate(129 70) rotate(-90)">S</text>
        <text transform="translate(72 128) rotate(-90)">O</text>
      </g>
    </svg>
  );
}

function NavBar() {
  return (
    <div className="absolute left-[999px] top-[173px] flex h-[118px] w-[36px] flex-col items-center rounded-[5px] border-2 border-[#c6c6c6] bg-[#f1f1f1]">
      <div className="ml-[19px] mt-[2px] size-[8px] rounded-full border border-[#aaa] text-center text-[7px] leading-[5px] text-[#999]">×</div>
      <Ico c="mt-[10px] size-[23px]"><g stroke="#999"><path d="M22 1v11a10.500 10.500 0 11-10-11z" fill="#f8f8f8" /><circle cx="12" cy="12" r="6" fill="#e8e8e8" /><path d="M8 17l-2 3M16 17l2 3" /></g></Ico>
      <Caret c="mt-[6px] scale-75 opacity-60" />
      <div className="mt-[3px] h-px w-[26px] bg-[#c0c0c0]" />
      <Ico c="mt-[8px] size-[17px]"><g stroke="#999"><path d="M1 1l13 13M14 1L1 14M1 5V1h4M10 1h4v4M1 10v4h4" /><circle cx="18" cy="17" r="4" fill="#f5f5f5" /><path d="M20 20l4 4" strokeWidth="2.500" /></g></Ico>
      <Caret c="mt-[9px] scale-75 opacity-60" />
      <div className="ml-[19px] mt-[9px] size-[8px] rounded-full border border-[#aaa] text-center text-[7px] leading-[5px] text-[#999]">=</div>
    </div>
  );
}

function ViewControls() {
  return (
    <div className="flex h-[21px] items-center bg-[#f0f0f0] text-[14px] text-black">
      <T w={41} c="ml-[29px]">1 : 100</T>
      <div className="ml-[24px] flex w-[342px] items-center justify-between">
        <Ico c="h-[17px] w-[20px]" vb="0 0 20 17"><rect x="1" y="1" width="18" height="15" fill="#fff" /><path d="M1 3h18M1 7h18M1 11h18M1 15h18" strokeWidth="2" strokeDasharray="2 2" /><path d="M3 5h16M3 9h16M3 13h16" strokeWidth="2" strokeDasharray="2 2" /></Ico>
        <Ico c="size-[20px]"><path d="M1 9l5-6h17v11l-6 7H1z" fill="#8fc4ea" stroke="#2d6da6" /><path d="M1 9l5-6h17l-6 6z" fill="#c8e4f8" stroke="#2d6da6" /><path d="M17 9v12" stroke="#2d6da6" /></Ico>
        <Ico c="size-[20px]"><circle cx="10" cy="10" r="5" fill="#fbdc6b" stroke="#d08a1c" /><path d="M10 0v3M0 10h3M3 3l2 2M17 3l-2 2M3 17l2-2M10 17v3" stroke="#d08a1c" strokeWidth="2" /><RedX x={13} y={11} /></Ico>
        <Ico c="size-[20px]"><path d="M1 18h12v4H1z" fill="#777" /><circle cx="10" cy="9" r="7" fill="#d3e7fa" stroke="#5b96cf" /><RedX x={13} y={12} /></Ico>
        <Ico c="size-[20px]"><path d="M1 7l3 2q1-3 7-3t7 4v5q-2 6-7 6-6 0-7-6zM9 4h5" fill="#eceff2" /><Bulb x={14} y={8} /></Ico>
        <Ico c="size-[20px]"><path d="M5 1v15h16M0 6h19v16M1 18h6" stroke="#666" strokeWidth="2.500" /><path d="M8 9h8v7H8z" fill="#7fb6e8" stroke="#2d6da6" /><RedX x={13} y={11} /></Ico>
        <Ico c="size-[20px]"><path d="M5 1v15h16M0 6h19v16M1 18h6" stroke="#666" strokeWidth="2.500" /><path d="M8 9h8v7H8z" fill="#7fb6e8" stroke="#2d6da6" /><Bulb x={13} y={3} /></Ico>
        <Ico c="size-[20px]"><House /><path d="M12 14h10v9H12zM14 14v-3q3-3 6 0v3" fill="#a9d5c6" stroke="#2e6b57" /></Ico>
        <Ico c="size-[20px]"><path d="M1 4q5-1 5 8M23 5q-5-4-6 0l3 6M12 14l3-1" /><circle cx="8" cy="16" r="4.500" fill="#e6f0f8" /><circle cx="18" cy="13" r="4" fill="#e6f0f8" /></Ico>
        <Ico c="size-[20px]"><Bulb x={7} y={5} /></Ico>
        <Ico c="size-[20px]"><rect x="2" y="4" width="20" height="15" rx="2" strokeWidth="2.500" strokeDasharray="3 1.500" stroke="#333" /><path d="M6 8h8v7H6z" fill="#fff" stroke="#333" /><circle cx="18" cy="17" r="4" fill="#ddd" stroke="#333" /></Ico>
        <Ico c="size-[20px]"><path d="M2 8l5-5h12v12l-4 5H2zM2 8h12v12M6 8v12M10 8v12M2 14h12" stroke="#444" /><path d="M4 12v10" stroke="#c22" strokeWidth="2.500" /><Bulb x={14} y={6} /></Ico>
        <Ico c="size-[20px]"><path d="M8 5l4-3h10v9l-4 3H8z" fill="#ddd" /><path d="M1 12l4-3h10v9l-4 4H1zM1 12h10v10M11 12l4-3" fill="#e4e4e4" /><path d="M5 5l3 2M20 14v4h-3" /></Ico>
        <Ico c="size-[20px]"><path d="M2 2v20M22 2v8M3 6h18" /><path d="M4 17h8" strokeDasharray="2 2" /><path d="M13 14h9v8h-9zM15 14v-3q3-2 5 0v3" fill="#999" /></Ico>
      </div>
      <Ico c="ml-[11px] h-[11px] w-[7px]" vb="0 0 7 11"><path d="M6 1L1 5.500 6 10" stroke="#333" strokeWidth="2" /></Ico>
      <div className="ml-[273px] h-[20px] w-[21px] bg-[#cdcdcd]" />
      <Ico c="ml-[273px] h-[11px] w-[7px]" vb="0 0 7 11"><path d="M1 1l5 4.500L1 10" stroke="#333" strokeWidth="2" /></Ico>
      <Ico c="ml-[15px] mt-[6px] size-[11px]" vb="0 0 11 11"><path d="M8 1h3M4 5h3M8 5h3M0 9h3M4 9h3M8 9h3" stroke="#b5b5b5" strokeWidth="2.500" /></Ico>
    </div>
  );
}

function Viewport() {
  return (
    <div className="flex w-[1058px] shrink-0 flex-col border-r border-[#ccc] bg-white">
      <div className="flex h-[25px] items-center justify-end bg-[#cccccc] pr-[4px]">
        <Ico c="h-[9px] w-[11px]" vb="0 0 11 9"><path d="M0 1h11" stroke="#333" strokeWidth="2" /><path d="M1 4h9L5.500 9z" fill="#333" stroke="none" /></Ico>
      </div>
      <div className="relative flex h-[743px] justify-end pr-px">
        <Model />
        <ViewCube />
        <NavBar />
        <div className="flex w-[20px] flex-col items-center bg-[#f0f0f0]">
          <Chev c="mt-[9px]" />
          <div className="mt-[346px] h-[20px] w-[20px] bg-[#cdcdcd]" />
          <Chev c="mt-[347px]" d="M1 1l5 5 5-5" />
        </div>
      </div>
      <ViewControls />
      <div className="mt-px h-px bg-[#c4c4c4]" />
    </div>
  );
}

type Node = { t: string; w: number; lv: number; ex?: "+" | "-"; ic?: React.ReactNode };
const level = <><rect x="1" y="1" width="22" height="22" strokeDasharray="4 1.500" stroke="#333" /><rect x="5" y="4.500" width="14" height="14" fill="#f4f4f4" strokeWidth="2.500" stroke="#777" /></>;
const NODES: Node[] = [
  { t: "Vistas (todas)", w: 88, lv: 0, ex: "-", ic: <><path d="M1 6V1h5M18 1h5v5M1 18v5h5M18 23h5v-5" stroke="#555" strokeWidth="2" /><path d="M7 8l3-3h8v11l-3 3H7z" fill="#eef0f2" strokeWidth="2" /></> },
  { t: "Plantas de piso", w: 100, lv: 1, ex: "-" },
  { t: "Nível 1", w: 44, lv: 2, ic: level },
  { t: "Nível 2", w: 46, lv: 2, ic: level },
  { t: "Terreno", w: 50, lv: 2, ic: level },
  { t: "Plantas de forro", w: 106, lv: 1, ex: "+" },
  { t: "Vistas 3D", w: 60, lv: 1, ex: "+" },
  { t: "Elevações (Elevação da construção)", w: 236, lv: 1, ex: "+" },
  { t: "Cortes (Corte da construção)", w: 190, lv: 1, ex: "+" },
  { t: "Legendas", w: 64, lv: 0, ic: <><rect x="1" y="2" width="22" height="20" fill="#e4e7ea" /><path d="M1 4h22" strokeWidth="4" /><path d="M4 9h6v5H4zM5 18h4" fill="#555" /><path d="M12 10h8M12 13h8M12 18h8" strokeDasharray="3 1.500" /></> },
  { t: "Tabelas/Quantidades (todas)", w: 191, lv: 0, ic: <><rect x="1" y="3" width="22" height="18" fill="#f4f5f6" /><path d="M1 5h22" strokeWidth="4" /><path d="M1 12h22M1 16h22M8 7v14M15 7v14" stroke="#999" /></> },
  { t: "Folhas (todas)", w: 93, lv: 0, ic: <><path d="M1 2h17l5 5v15H1z" fill="#dfe3e8" strokeWidth="2" /><path d="M5 19V9h9v5h-4v5zM18 12v7" strokeWidth="2" /></> },
  { t: "Famílias", w: 53, lv: 0, ex: "+", ic: <><path d="M14 1h8v21H3v-8h11z" fill="#eceef1" strokeWidth="2.200" /><path d="M3 1h7v9H3z" fill="#eceef1" strokeWidth="2.200" /></> },
  { t: "Grupos", w: 48, lv: 0, ex: "+", ic: <><path d="M5 1H1v22h4M19 1h4v22h-4" strokeWidth="2" stroke="#444" /><circle cx="10" cy="10" r="5" fill="#b9c3cf" /><path d="M8 11l4-3h6v8l-3 3H8z" fill="#cdd5de" fillOpacity=".6" /></> },
  { t: "Vínculos do Revit", w: 116, lv: 0, ic: <><rect x="1.500" y="8" width="10" height="8" rx="3.500" stroke="#d69a1a" strokeWidth="4" fill="#f7d672" /><rect x="12.500" y="8" width="10" height="8" rx="3.500" stroke="#d69a1a" strokeWidth="4" fill="#f7d672" /><path d="M6 12h12" stroke="#8a5d08" strokeWidth="2" /></> },
];

const Expander = ({ s }: { s: "+" | "-" }) => (
  <Ico c="size-[13px] relative" vb="0 0 13 13">
    <rect x=".5" y=".5" width="12" height="12" fill="#f8f8f8" stroke="#919191" strokeWidth="1" />
    <path d={s === "+" ? "M3 6.500h7M6.500 3v7" : "M3 6.500h7"} stroke="#2a3e9c" strokeWidth="1.200" />
  </Ico>
);

function Browser() {
  return (
    <div className="flex min-w-0 grow flex-col border-l-2 border-[#c4c4c4] bg-[#eeeeee] text-[14px]">
      <div className="flex h-[24px] shrink-0 items-center pl-[5px] text-[#333]">
        <T w={397}>Navegador de projeto - Casa em Guemes - Zooco Estudio....</T>
        <Ico c="ml-[8px] size-[13px]" vb="0 0 16 16"><path d="M2 1l12 14M14 1L2 15" stroke="#222" strokeWidth="3" /></Ico>
      </div>
      <div className="ml-px flex h-[763px] flex-col bg-white pt-px text-black">
        {NODES.map((n, i) => (
          <div key={n.t} className="relative flex h-[22px] items-center leading-[22px]">
            <div className={"absolute left-[12px] w-px border-l border-dotted border-[#999] " + (i === 0 ? "top-[11px] h-[11px]" : i === 14 ? "top-0 h-[11px]" : "top-0 h-[22px]")} />
            {n.lv === 0 && <div className="absolute left-[12px] top-[11px] w-[18px] border-t border-dotted border-[#999]" />}
            {i > 0 && i < 9 && <div className={"absolute left-[38px] top-0 border-l border-dotted border-[#999] " + (i === 8 ? "h-[11px]" : "h-[22px]")} />}
            {n.lv === 1 && <div className="absolute left-[44px] top-[11px] w-[12px] border-t border-dotted border-[#999]" />}
            {n.lv === 2 && <div className={"absolute left-[64px] top-0 w-[16px] border-l border-dotted border-[#999] " + (i === 4 ? "h-[11px]" : "h-[22px]")} />}
            {n.lv === 2 && <div className="absolute left-[64px] top-[11px] w-[16px] border-t border-dotted border-[#999]" />}
            {n.lv === 0 && <div className="w-[28px] pl-[6px]">{n.ex && <Expander s={n.ex} />}</div>}
            {n.lv === 1 && <div className="w-[60px] pl-[32px]"><Expander s={n.ex!} /></div>}
            {n.lv === 2 && <div className="w-[80px]" />}
            {n.ic && <Ico c="relative size-[19px] -top-px">{n.ic}</Ico>}
            <T w={n.w} c={n.lv === 0 ? "ml-[7px]" : n.lv === 2 ? "ml-[8px]" : ""}>{n.t}</T>
            {i === 0 && <div className="absolute left-[52px] top-0 h-[21px] w-[94px] bg-black/10" />}
          </div>
        ))}
      </div>
    </div>
  );
}

function StatusBar() {
  return (
    <div className="flex h-[32px] shrink-0 items-center bg-[#cccccc] pt-[2px] text-[14px] text-[#222]">
      <T w={563} c="ml-[2px]">Clique para selecionar, TAB para alternativas, CTRL adiciona, SHIFT cancela a seleção.</T>
      <Ico c="ml-[107px] size-[21px]">
        <path d="M7 3l3-2h8v8l-2 2H7z" fill="#a9dca5" stroke="#2f7a2c" /><path d="M1 12l3-3h8v11l-3 3H1zM1 12h8v11M9 12l3-3" fill="#9fcdf0" stroke="#1f5f94" /><Wrench x={14} y={7} />
      </Ico>
      <div className="ml-[8px] flex h-[22px] w-[254px] items-center justify-end bg-white pr-[4px]"><Chev d="M1 1l5 5 5-5" k="#aaa" sw={1.3} /></div>
      <Ico c="ml-[7px] size-[20px]"><path d="M6 2h14v6h-7v6h-3V8H6z" fill="#e6e6e6" stroke="#999" /><path d="M1 23l2-7h5l3 7z" fill="#888" stroke="none" /></Ico>
      <T w={12} c="ml-[7px]">:0</T>
      <Ico c="ml-[23px] size-[21px]"><rect x="1" y="2" width="22" height="20" fill="#f2f4f6" stroke="#2c3440" strokeWidth="2" /><path d="M1 4h22" strokeWidth="4" stroke="#2c3440" /><path d="M4 10h3M10 10h9M8 14h11M8 18h11" stroke="#2c3440" strokeWidth="2" /></Ico>
      <Ico c="ml-[10px] size-[19px]"><path d="M6 1h17v22H6z" fill="#9a9a9a" stroke="#8a8a8a" /><path d="M0 15h9v-4l6 6-6 6v-4H0z" fill="#c5c5c5" stroke="#8a8a8a" /></Ico>
      <div className="ml-[8px] flex h-[22px] w-[254px] items-center justify-between bg-white pl-[2px] pr-[3px] text-[#8a8a8a]"><T w={115}>Modelo principal</T><Chev d="M1 1l5 5 5-5" k="#aaa" sw={1.3} /></div>
      <div className="ml-[297px] flex w-[198px] items-center justify-between">
        <Ico c="size-[20px]"><rect x="1" y="2" width="10" height="8" rx="4" fill="#ffe98a" stroke="#b98712" strokeWidth="2.500" /><rect x="12" y="2" width="10" height="8" rx="4" fill="#ffe98a" stroke="#b98712" strokeWidth="2.500" /><Cursor x={9} y={6} /></Ico>
        <Ico c="size-[20px]"><path d="M1 21L10 4l4 8v9zM1 21h12M5 15h8" fill="#bfe0f7" stroke="#2d6da6" /><path d="M14 1l8 8M22 1l-8 8" stroke="#c42b22" strokeWidth="3" /><Cursor x={13} y={7} s={0.9} /></Ico>
        <Ico c="size-[20px]"><path d="M3 2h14l-2 7 3 5H2l3-5z" fill="#f08a4a" stroke="#9c3d14" /><path d="M10 14v8" stroke="#9c3d14" strokeWidth="2" /><Cursor x={12} y={7} s={0.9} /></Ico>
        <Ico c="size-[20px]"><path d="M2 5l6-4v17l-6 4zM8 3h8v15H2" fill="#bfe0f7" stroke="#2d6da6" /><path d="M14 1l8 8M22 1l-8 8" stroke="#c42b22" strokeWidth="3" /><Cursor x={13} y={7} s={0.9} /></Ico>
        <Ico c="size-[20px]"><path d="M8 0v15M0 7h15M6 2l2-2 2 2M6 13l2 2 2-2M2 5L0 7l2 2M13 5l2 2-2 2" stroke="#222" /><Cursor x={13} y={8} s={0.9} /></Ico>
        <Ico c="size-[19px]"><circle cx="12" cy="12" r="7.500" stroke="#a8a8a8" strokeWidth="5" strokeDasharray="5 .9" /></Ico>
        <Ico c="size-[20px]"><path d="M1 2h22l-9 10v10l-4 1V12z" fill="#c3cedb" strokeWidth="1.800" /></Ico>
      </div>
      <T w={12}>:0</T>
    </div>
  );
}

const Edge = ({ f }: { f: string }) => (
  <Ico c="size-[21px]">
    <g stroke="none">
      <circle cx="12" cy="12" r="11.500" fill="#1c86d1" />
      <path d="M1 10C2 3 8 .5 12 .5c7 0 11.500 5 11.500 10 0 4-3 6-6 6-3 0-5-1-3-4 1-3-2-6-6-5-4 0-7 1-7.500 2.500z" fill="#3fd08c" />
      <path d="M1 10C2 3 8 .5 12 .5c3 0 6 1 8 3-7-2-14 0-19 6.500z" fill="#2cc3d8" />
      <circle cx="8" cy="18" r="5.500" fill={f} />
      <circle cx="8" cy="16.500" r="2.500" fill="#8d6b55" />
    </g>
  </Ico>
);

function TaskItem({ on, active, children }: Kids & { on?: boolean; active?: boolean }) {
  return (
    <div className={"relative flex h-full w-[46px] shrink-0 items-center justify-center " + (active ? "bg-[#333]" : "")}>
      {children}
      {on && <div className={"absolute bottom-0 h-[3px] bg-[#76b2e4] " + (active ? "w-full" : "w-[35px]")} />}
    </div>
  );
}

function Taskbar() {
  return (
    <footer className="flex h-[38px] shrink-0 items-center bg-[#101010] text-[14px] text-white">
      <Ico c="ml-[12px] size-[20px]"><path d="M0 3.500L10 2v9.500H0zM11.500 1.800L24 0v11.500H11.500zM0 13h10v9.500L0 21zM11.500 13H24v11l-12.500-1.800z" fill="#fff" stroke="none" /></Ico>
      <Ico c="ml-[25px] size-[20px]"><path d="M1 1v3h15V1M1 8h15v9H1zM1 24v-3h15v3M22 1v5M22 12v12" stroke="#fff" /><path d="M20.500 7h3v4h-3z" fill="#fff" stroke="none" /></Ico>
      <div className="ml-[551px] flex h-full">
        <TaskItem><Ico c="size-[19px]"><circle cx="12" cy="12" r="12" fill="#1ed760" stroke="none" /><path d="M5 8.500q8-2.500 14.500 1M6 12.500q7-2 12 1M7 16.200q5-1.500 9.500 1" stroke="#101010" strokeWidth="2" /></Ico></TaskItem>
        <TaskItem on><Edge f="#3d4a2a" /></TaskItem>
        <TaskItem><Edge f="#d5d2d0" /></TaskItem>
        <TaskItem on><Ico c="size-[19px]"><g stroke="none"><path d="M1 3h8l2 2h12v16H1z" fill="#f9d36b" /><path d="M1 3h8l2 2v3H1z" fill="#e0a52b" /><path d="M4 22v-9h16v9h-4v-5H8v5z" fill="#3e8fd8" /></g></Ico></TaskItem>
        <TaskItem on><Ico c="size-[20px]"><g stroke="none"><path d="M17 0l7 3v18l-7 3z" fill="#2aa9f2" /><path d="M17 0v7L4 18l-3-2.500zM1 8.500L4 6l13 11v7z" fill="#0a7bc7" /></g></Ico></TaskItem>
        <TaskItem><Ico c="size-[20px]"><rect x="0" y="3" width="24" height="19" fill="#444" stroke="none" /><path d="M0 4h24" stroke="#9a9a9a" strokeWidth="2" /><path d="M4 9l5 4-5 4M11 18h8" stroke="#fff" strokeWidth="2" /></Ico></TaskItem>
        <TaskItem><Ico c="size-[19px]"><path d="M1 1h13v4H7v4h5v4H7v10H1z" fill="#f0421c" stroke="none" /><circle cx="16" cy="15" r="5" fill="#101010" stroke="#2e55c0" strokeWidth="3" /><circle cx="16" cy="15" r="7.500" stroke="#2e55c0" strokeWidth="2" strokeDasharray="3 2.900" /></Ico></TaskItem>
        <TaskItem><Ico c="size-[20px]"><rect x="2" y="1" width="20" height="22" rx="3" fill="#e0134d" stroke="none" /><path d="M2 17h20v3q0 3-3 3H5q-3 0-3-3z" fill="#8f0b31" stroke="none" /><text x="7" y="14" fontSize="13" fontWeight="700" fill="#fff" stroke="none">A</text><text x="7" y="22" fontSize="5" fontWeight="700" fill="#fff" stroke="none">CAD</text></Ico></TaskItem>
        <TaskItem on active><Ico c="size-[20px]"><rect x="2" y="1" width="20" height="22" rx="3" fill="#1d6ef0" stroke="none" /><path d="M2 17h20v3q0 3-3 3H5q-3 0-3-3z" fill="#0a3a94" stroke="none" /><text x="7.500" y="14" fontSize="13" fontWeight="700" fill="#fff" stroke="none">R</text><text x="7" y="22" fontSize="5" fontWeight="700" fill="#fff" stroke="none">RVT</text></Ico></TaskItem>
        <TaskItem><Ico c="size-[19px]"><path d="M1 18L12 9H4M13 3l8 7" stroke="#ea7600" strokeWidth="3" /><ellipse cx="15" cy="14.500" rx="8.500" ry="7.500" fill="#ea7600" stroke="none" /><circle cx="15" cy="14.500" r="4.700" fill="#fff" stroke="none" /><circle cx="15" cy="14.500" r="2.700" fill="#265787" stroke="none" /></Ico></TaskItem>
        <TaskItem><Ico c="size-[20px]"><rect width="24" height="24" fill="#000" stroke="none" /><path d="M1 2l6 7 3-6 4 6 5-1-4 6 5 3-6 7-8-3-4-8z" fill="#f2f2f2" stroke="none" /><path d="M6 12l6 3-2 4z" fill="#000" stroke="none" /><text x="16" y="10" fontSize="12" fontWeight="700" fill="#fff" stroke="none">7</text></Ico></TaskItem>
        <TaskItem><Ico c="size-[19px]"><defs><linearGradient id="blob" x1="1" y1="0" x2="0" y2="1"><stop stopColor="#2a8af0" /><stop offset="1" stopColor="#e0637a" /></linearGradient></defs><path d="M5 0q5 0 5 5l-1 7-5 3z" fill="#ef7a1d" stroke="none" /><circle cx="13" cy="14" r="9.500" fill="url(#blob)" stroke="none" /><circle cx="13" cy="14" r="3.500" fill="#f3eefa" stroke="none" /></Ico></TaskItem>
        <TaskItem on><Ico c="size-[20px]"><rect x="1" y="1" width="22" height="22" fill="#27a3e8" stroke="none" /><path d="M1 23V17l8-8 14 14z" fill="#0e3f78" stroke="none" /><circle cx="17" cy="6" r="2" fill="#fff" stroke="none" /></Ico></TaskItem>
      </div>
      <div className="ml-[298px] flex w-[230px] items-center justify-between">
        <Ico c="size-[18px]"><path d="M2 17L12 7l10 10" stroke="#fff" strokeWidth="2" /></Ico>
        <Ico c="size-[21px]"><path d="M10 0l9 3v9q0 7-9 11Q1 19 1 12V3z" fill="#fff" stroke="none" /><path d="M10 1v21M1 11h18" stroke="#101010" /><circle cx="17" cy="18" r="6" fill="#159c48" stroke="none" /><path d="M14 18l2 2.500 4-5" stroke="#fff" strokeWidth="1.800" /></Ico>
        <Ico c="size-[20px]"><path d="M1 18q-2-6 4-8 2-7 9-6 5 1 6 6 4 1 3 8z" fill="#1478d4" stroke="none" /><circle cx="17" cy="18" r="6" fill="#d6432f" stroke="none" /><path d="M14.500 15.500l5 5M19.500 15.500l-5 5" stroke="#fff" strokeWidth="1.800" /></Ico>
        <Ico c="size-[20px]"><path d="M5 19q-5 0-4-5 1-4 5-4 2-6 8-5 5 1 5 6 5 0 4 5-1 3-4 3z" fill="#e8e8e8" stroke="none" /></Ico>
        <Ico c="size-[18px]"><path d="M4 7h10v11H4zM14 11l5-3v9l-5-3M6 3q5-3 9 0M6 22q5 3 9 0" stroke="#fff" strokeWidth="1.800" /></Ico>
        <Ico c="size-[20px]"><path d="M6 8h16v11H4v-6M1 4h5v4q-3 4-5 0zM22 11h2v4h-2M2 1v3M5 1v3" stroke="#fff" strokeWidth="1.800" /><path d="M8 10h12v7H8z" fill="#fff" stroke="none" /></Ico>
        <Ico c="size-[18px]"><path d="M3 22Q3 4 22 3M8 22Q8 10 22 9" stroke="#888" strokeWidth="1.800" /><path d="M13 22q0-7 9-7" stroke="#fff" strokeWidth="2" /><circle cx="20" cy="21" r="2" fill="#fff" stroke="none" /></Ico>
        <Ico c="size-[20px]"><path d="M1 9h4l5-5v16l-5-5H1z" stroke="#fff" /><path d="M13 9q2 3 0 6M16 6q4 6 0 12" stroke="#fff" /><path d="M19 3q6 9 0 18" stroke="#888" /></Ico>
      </div>
      <T w={29} c="ml-[13px]">POR</T>
      <T w={34} c="ml-[16px]">11:51</T>
      <Ico c="ml-[24px] size-[20px]"><path d="M1 1h22v17h-7l-4 5v-5H1z" fill="#fff" stroke="none" /><path d="M5 6h14M5 10h14M5 14h9" stroke="#101010" strokeWidth="1.600" /></Ico>
    </footer>
  );
}

function Ink() {
  return (
    <svg viewBox="0 0 1920 1080" className="pointer-events-none absolute inset-0 size-full" fill="none" stroke="#b01863" strokeWidth="5.500" strokeLinecap="round" strokeLinejoin="round">
      <path d="M1004 61H987Q983 61 983 56L983 36Q983 32 988 32L1073 30Q1079 30 1079 35L1078 54Q1078 58 1073 58H1036Q1027 58 1026 72L1025 185C1026 215 1040 228 1060 244C1095 270 1125 282 1151 298C1165 307 1180 323 1190 330Q1208 343 1222 344" />
      <path d="M1242 332.500Q1251 331 1252.700 309L1257.700 360Q1263 368 1264 386M1234.500 390Q1255 389 1270 385T1304 379" />
      <path d="M257 110Q262 88 268 88Q276 92 285 96M265 95C264 140 266 195 269 235C273 290 275 300 281 333C289 378 300 388 320 395C350 403 375 408 413 408L500 409" strokeWidth="5" />
      <path d="M534 391Q550 389 563 385Q571 384 569 393Q562 418 549 438Q547 443 551 443L602 443" />
    </svg>
  );
}

export default function App() {
  return (
    <div className="relative flex h-[1080px] w-[1920px] flex-col overflow-hidden bg-[#eeeeee] font-['Open_Sans',sans-serif]">
      <TitleBar />
      <Tabs />
      <Ribbon />
      <div className="h-[33px] shrink-0" />
      <div className="flex h-[794px] shrink-0 border-t-2 border-[#cccccc]">
        <Properties />
        <div className="w-[2px] shrink-0 bg-[#cccccc]" />
        <Viewport />
        <Browser />
      </div>
      <StatusBar />
      <Taskbar />
      <Tooltip />
      <Ink />
    </div>
  );
}
